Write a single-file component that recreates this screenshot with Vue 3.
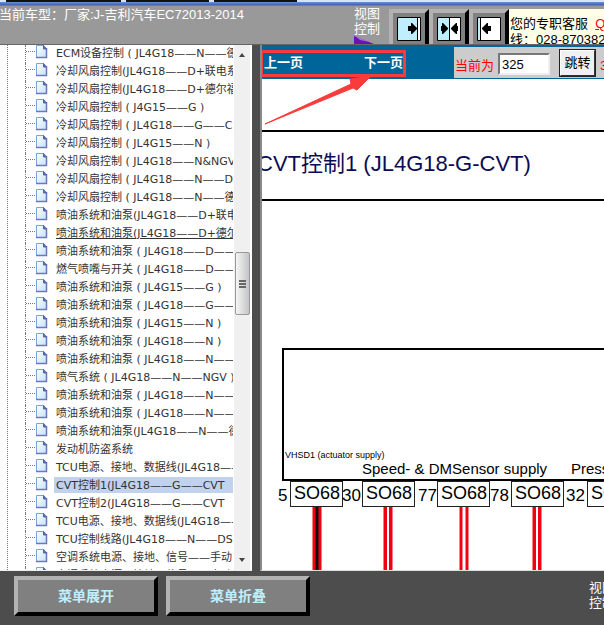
<script setup>
import { ref } from 'vue'

const page = ref('325')

const items = [
  'ECM设备控制 ( JL4G18——N——德',
  '冷却风扇控制(JL4G18——D+联电系',
  '冷却风扇控制(JL4G18——D+德尔福',
  '冷却风扇控制 ( J4G15——G )',
  '冷却风扇控制 ( JL4G18——G——C',
  '冷却风扇控制 ( JL4G15——N )',
  '冷却风扇控制 ( JL4G18——N&NGV',
  '冷却风扇控制 ( JL4G18——N——D',
  '冷却风扇控制 ( JL4G18——N——德',
  '喷油系统和油泵(JL4G18——D+联电',
  '喷油系统和油泵(JL4G18——D+德尔',
  '喷油系统和油泵 ( JL4G18——D——',
  '燃气喷嘴与开关 ( JL4G18——D——',
  '喷油系统和油泵 ( JL4G15——G )',
  '喷油系统和油泵 ( JL4G18——G——',
  '喷油系统和油泵 ( JL4G15——N )',
  '喷油系统和油泵 ( JL4G18——N )',
  '喷油系统和油泵 ( JL4G18——N——',
  '喷气系统 ( JL4G18——N——NGV )',
  '喷油系统和油泵 ( JL4G18——N——',
  '喷油系统和油泵 ( JL4G18——N——',
  '喷油系统和油泵(JL4G18——N——德',
  '发动机防盗系统',
  'TCU电源、接地、数据线(JL4G18——',
  'CVT控制1(JL4G18——G——CVT',
  'CVT控制2(JL4G18——G——CVT',
  'TCU电源、接地、数据线(JL4G18——',
  'TCU控制线路(JL4G18——N——DS',
  '空调系统电源、接地、信号——手动',
  '空调系统电源、接地、信号——自动'
]
const hovered = 10
const selected = 24

const plugs = [
  { x: 29, pin: '5', pinX: 16, core: '#111', coreX: 55, coreW: 3 },
  { x: 101, pin: '30', pinX: 80, core: '#fff', coreX: 126, coreW: 2 },
  { x: 176, pin: '77', pinX: 156, core: '#fff', coreX: 202, coreW: 3 },
  { x: 250, pin: '78', pinX: 228, core: '#fff', coreX: 275, coreW: 2 },
  { x: 326, pin: '32', pinX: 304, core: '#fff', coreX: 352, coreW: 3 }
]
</script>

<template>
  <div class="page">
    <div class="strip"><i></i><i></i><i></i></div>

    <header class="top">
      <p class="model">当前车型：厂家:J-吉利汽车EC72013-2014</p>
      <div class="view">视图<br>控制
        <svg class="gem" width="20" height="8" viewBox="0 0 20 8"><path d="M0 0L20 8H0z" fill="#6a12b8" /><path d="M1 0L16 6 6 4z" fill="#a86be0" /></svg>
      </div>
      <div class="modes">
        <button type="button" aria-label="right">
          <svg width="24" height="24" viewBox="0 0 24 24"><path d="M.5.5h23v23H.5z" fill="#fff" stroke="#000" /><path d="M1 1h19v22H1z" fill="#bfefff" /><path d="M20.500 1v22" stroke="#000" /><path d="M11 9h3V6h1l5 5v1l-5 5h-1v-3h-3z" /></svg>
        </button>
        <button type="button" aria-label="split">
          <svg width="24" height="24" viewBox="0 0 24 24"><path d="M.5.5h23v23H.5z" fill="#fff" stroke="#000" /><path d="M1 1h11v22H1z" fill="#bfefff" /><path d="M12.500 1v22" stroke="#000" /><path d="M4 9h1V6h1l5 5v1l-5 5H5v-3H4zM21 9h-1V6h-1l-5 5v1l5 5h1v-3h1z" /></svg>
        </button>
        <button type="button" aria-label="left">
          <svg width="24" height="24" viewBox="0 0 24 24"><path d="M.5.5h23v23H.5z" fill="#fff" stroke="#000" /><path d="M1 1h2v22H1z" fill="#bfefff" /><path d="M3.500 1v22" stroke="#000" /><path d="M14 9h-3V6h-1l-5 5v1l5 5h1v-3h3z" /></svg>
        </button>
      </div>
      <div class="service">您的专职客服&nbsp; <a href="#">Q</a><br>线：028-870382</div>
    </header>

    <main class="body">
      <nav class="side">
        <ul class="tree">
          <li v-for="(t, i) in items" :key="i" :class="{ hovered: i === hovered, selected: i === selected }">
            <span class="lead"></span>
            <svg class="doc" width="14" height="15" viewBox="0 0 14 15">
              <defs><linearGradient id="paper" x1="0" y1="0" x2="1" y2="1"><stop offset="0" stop-color="#fff" /><stop offset="1" stop-color="#c3e0ff" /></linearGradient></defs>
              <path d="M1 1h8l3 3v10H1z" fill="url(#paper)" />
              <path d="M1.500 14V1.500H9" fill="none" stroke="#7da3dc" />
              <path d="M11.500 4v9.500H1" fill="none" stroke="#6a78b4" stroke-width="1.500" />
              <path d="M8.500 1.500V5h3z" fill="#5873b8" stroke="#5563a0" />
            </svg>
            <a href="#">{{ t }}</a>
          </li>
        </ul>
        <div class="scroll">
          <i class="up"></i>
          <div class="thumb"><b></b><b></b><b></b></div>
          <i class="down"></i>
        </div>
      </nav>

      <section class="viewer">
        <div class="bar">
          <button class="nav" type="button">上一页</button>
          <button class="nav" type="button">下一页</button>
          <form class="jump" @submit.prevent>
            <label for="page">当前为</label>
            <input id="page" v-model="page" type="text">
            <button type="submit">跳转</button>
            <span>3</span>
          </form>
        </div>
        <svg class="diagram" width="100%" height="100%">
          <path d="M0 52h2000M0 121h2000" stroke="#000" stroke-width="2" />
          <text x="-5" y="92" class="title">CVT控制1 (JL4G18-G-CVT)</text>
          <path d="M2000 270H21v131h1979" fill="none" stroke="#000" stroke-width="2" />
          <text x="23" y="379" class="narrow">VHSD1 (actuator supply)</text>
          <text x="100" y="395" class="label">Speed- &amp; DMSensor supply</text>
          <text x="309" y="395" class="label">Press</text>
          <g v-for="p in plugs" :key="p.pin">
            <rect :x="p.x - 0.5" y="402.500" width="52" height="25" fill="#fff" stroke="#222" />
            <text :x="p.x + 3" y="420" class="pin">SO68</text>
            <text :x="p.pinX" y="422" class="pin num">{{ p.pin }}</text>
            <path :d="`M${p.coreX} 428v600`" stroke="#f00010" stroke-width="9" />
            <path :d="`M${p.coreX} 428v600`" :stroke="p.core" :stroke-width="p.coreW" />
          </g>
        </svg>
        <svg class="mark" width="150" height="80" viewBox="0 0 150 80">
          <path d="M1.500 6.500h143v24h-143z" fill="none" stroke="#f93b3b" stroke-width="3" />
          <path d="M5 79L91 39 90 34 111 31 97 45 93 43z" fill="#f93b3b" stroke="#f93b3b" stroke-linejoin="round" />
        </svg>
      </section>
    </main>

    <footer class="foot">
      <button type="button">菜单展开</button>
      <button type="button">菜单折叠</button>
      <div class="view">视图<br>控制</div>
    </footer>
  </div>
</template>

<style>
body { overflow: hidden; }
</style>

<style scoped>
.page {
  height: 100vh;
  display: grid;
  grid-template-rows: 6px 39px minmax(0, 1fr) 54px;
  background: #4d4d4d;
  font: 13px/15px "Liberation Sans", "Noto Sans CJK SC", sans-serif;
  overflow: hidden;
}
.strip {
  display: flex;
  gap: 5px;
  padding-left: 6px;
  background: linear-gradient(#d8e4f5 0 2px, #6d8ed8 2px, #3f62b8 5px, #8a94b0);
}
.strip i { width: 115px; height: 2px; background: #111; }
.strip i + i { width: 83px; }
.top { display: flex; background: #999; color: #fff; overflow: hidden; border-bottom: 1px solid #666; }
.model { flex: 0 0 354px; margin: 0; padding-top: 1px; text-indent: -1px; white-space: nowrap; }
.top .view { width: 35px; flex: none; }
.view { white-space: nowrap; }
.gem { display: block; }
.modes { display: flex; flex: none; padding-top: 3px; }
button { font: inherit; padding: 0; margin: 0; border-radius: 0; cursor: pointer; }
.modes button {
  width: 40px;
  height: 40px;
  padding: 4px;
  border: 4px solid;
  border-color: #b2b2b2 #000 #000 #b2b2b2;
  background: #808080;
  line-height: 0;
}
.service {
  flex: 1;
  min-width: 0;
  margin-top: 3px;
  padding: 7px 0 0 1px;
  background: #ffffe8;
  color: #000;
  line-height: 16px;
  white-space: nowrap;
  overflow: hidden;
}
.service a { color: #f00; }

.body { display: grid; grid-template-columns: 252px minmax(0, 1fr); column-gap: 8px; min-height: 0; }
.side { display: flex; background: #fff; overflow: hidden; border-bottom: 1px solid #eee; box-sizing: border-box; }
.tree {
  flex: 1;
  min-width: 0;
  height: 100%;
  overflow: hidden;
  list-style: none;
  margin: 0 0 0 7px;
  padding: 0;
  border-left: 1px dotted #777;
  font: 11px/14px "DejaVu Sans", "Noto Sans CJK SC", sans-serif;
}
.tree li { display: flex; height: 18px; margin-left: 17px; border-left: 1px dotted #777; white-space: nowrap; }
.lead { flex: none; width: 9px; height: 6px; border-bottom: 1px dotted #777; }
.doc { flex: none; margin-top: -1px; }
.tree a {
  flex: 1;
  min-width: 0;
  margin: 0 1px 0 5px;
  padding: 2px 0 0 2px;
  height: 14px;
  color: #333;
  text-decoration: none;
  overflow: hidden;
}
.hovered a { text-decoration: underline; }
.selected a { background: #c1d2ee; }
.scroll {
  flex: none;
  width: 18px;
  display: flex;
  flex-direction: column;
  align-items: center;
  background: #f0f0f0;
  box-sizing: border-box;
  padding: 8px 2px;
  border-right: 2px solid #fff;
}
.up, .down { border: 3px solid transparent; }
.up { border-top: 0; border-bottom: 4px solid #444; }
.down { border-bottom: 0; border-top: 4px solid #444; margin-top: auto; }
.thumb {
  width: 13px;
  height: 61px;
  margin-top: 195px;
  border: 1px solid #999;
  border-radius: 2px;
  background: linear-gradient(90deg, #f5f5f5, #ddd 50%, #c2c4c9);
  display: flex;
  flex-direction: column;
  justify-content: center;
  align-items: center;
  gap: 1px;
}
.thumb b { width: 7px; height: 2px; background: #666; }

.viewer {
  position: relative;
  display: flex;
  flex-direction: column;
  background: #fff;
  overflow: hidden;
  border-left: 2px solid #888;
  border-bottom: 1px solid #ddd;
  box-sizing: border-box;
}
.bar { flex: none; display: flex; height: 34px; background: #069; }
.nav { width: 41px; height: 34px; margin: 0 58px 0 1px; border: 0; background: none; color: #fff; font-weight: bold; white-space: nowrap; }
.nav + .nav { margin-right: 50px; }
.jump {
  flex: 1;
  min-width: 0;
  display: flex;
  align-items: center;
  margin: 2px 0 1px;
  padding-left: 1px;
  background: #ccc;
  color: #f00;
  overflow: hidden;
}
.jump > * { flex: none; }
.jump label, .jump span { padding-top: 6px; }
.jump input {
  width: 52px;
  height: 22px;
  margin: 3px 9px 0 4px;
  padding: 0 2px;
  box-sizing: border-box;
  border: 2px solid;
  border-color: #777 #eee #eee #777;
  background: #fff;
  color: #000;
  font: inherit;
}
.jump button {
  width: 37px;
  height: 28px;
  margin-right: 4px;
  border: 2px solid;
  border-color: #fff #333 #333 #fff;
  outline: 1px solid #222;
  outline-offset: -1px;
  background: #f0f0f0;
  color: #000;
}
.diagram { flex: 1; min-height: 0; display: block; font-family: "Liberation Sans", "Noto Sans CJK SC", sans-serif; }
.title { font-size: 22px; fill: #0b0b55; }
.narrow { font-family: "Liberation Sans Narrow", "Liberation Sans", sans-serif; font-size: 9px; }
.label { font-size: 15px; }
.pin { font-size: 18px; }
.num { font-size: 17px; }
.mark { position: absolute; left: -2px; top: 0; pointer-events: none; }

.foot { display: flex; color: #fff; padding: 5px 0 0 14px; gap: 8px; overflow: hidden; }
.foot button {
  flex: none;
  width: 144px;
  height: 40px;
  border: 4px solid;
  border-color: #b2b2b2 #000 #000 #b2b2b2;
  background: #808080;
  color: #bfefff;
  font-size: 14px;
  font-weight: bold;
}
.foot .view { flex: none; width: 15px; margin-left: auto; padding-top: 4px; }
</style>
